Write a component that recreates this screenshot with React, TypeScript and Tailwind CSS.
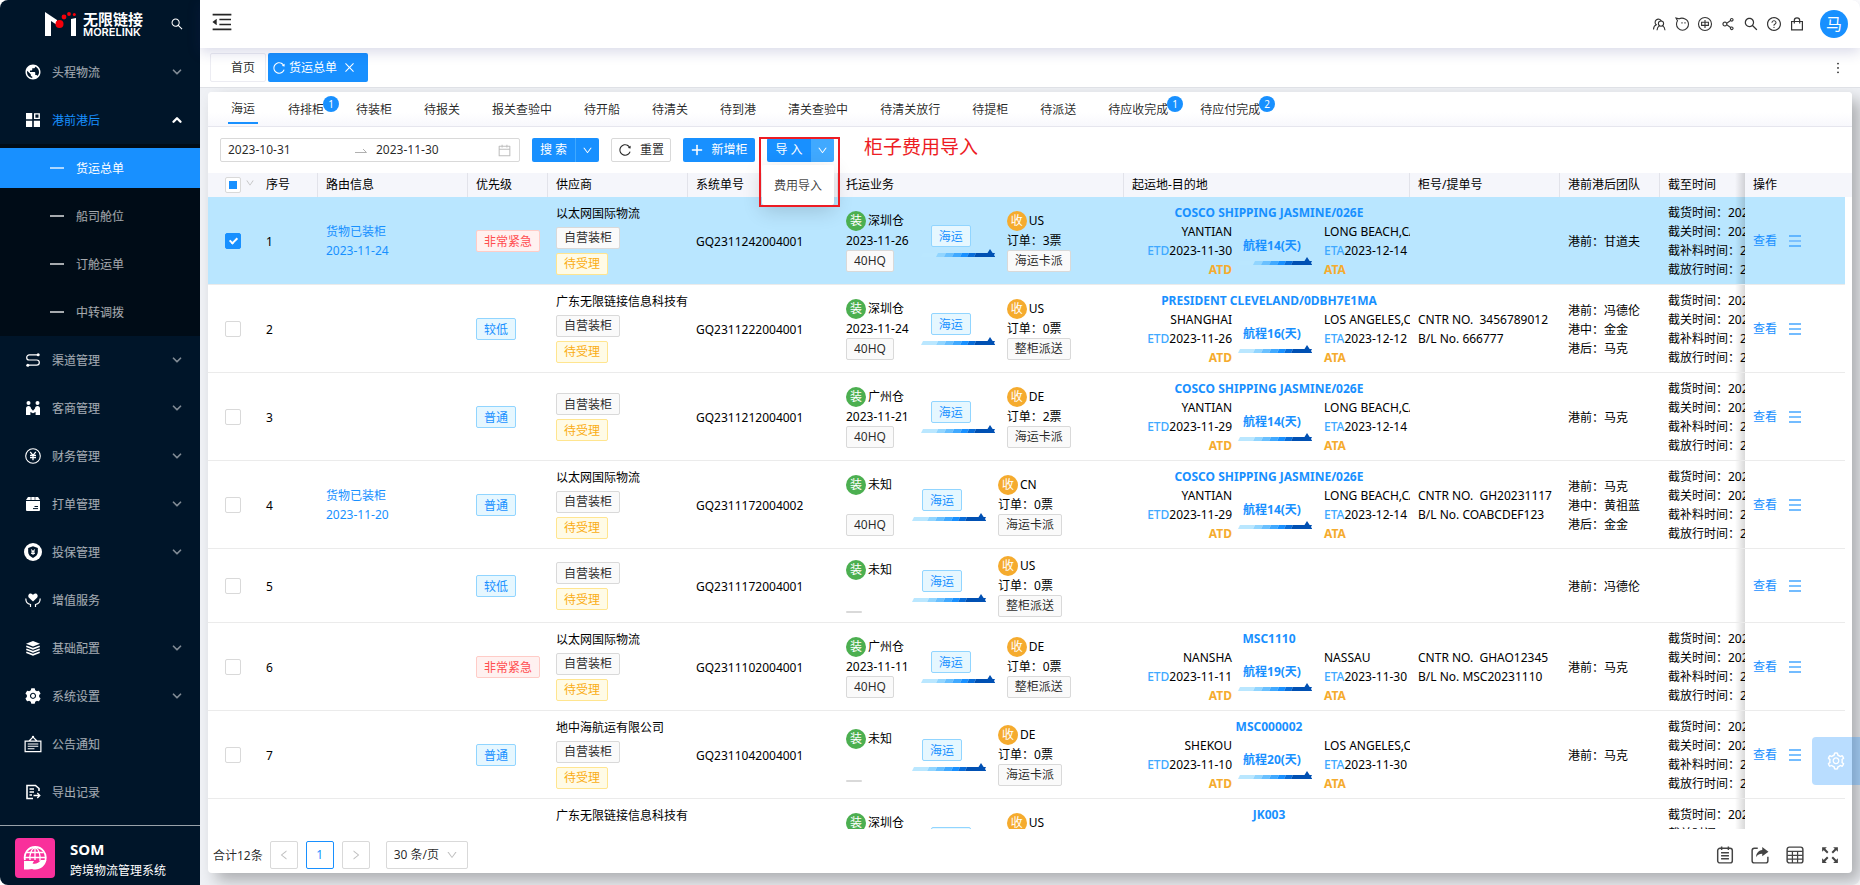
import type { ReactNode } from "react";
import clsx from "clsx";
import {
  AiFillSetting,
  AiOutlineCalendar,
  AiOutlineClose,
  AiOutlineDown,
  AiOutlineLeft,
  AiOutlineMenuFold,
  AiOutlineMore,
  AiOutlinePlus,
  AiOutlineQuestionCircle,
  AiOutlineReload,
  AiOutlineRight,
  AiOutlineSearch,
  AiOutlineSetting,
  AiOutlineShareAlt,
} from "react-icons/ai";
import { MdPublic } from "react-icons/md";
import { ChevronDown, ChevronUp } from "lucide-react";

/* ---------- icons ---------- */

function Svg({ size = 16, children }: { size?: number; children: ReactNode }) {
  return (
    <svg
      width={size}
      height={size}
      viewBox="0 0 16 16"
      fill="none"
      stroke="currentColor"
      strokeWidth="1.3"
      aria-hidden="true"
    >
      {children}
    </svg>
  );
}

const GridIcon = () => (
  <Svg>
    <path d="M1 1h6.2v6.2H1zM1 8.8h6.2V15H1zM8.8 8.8H15V15H8.8z" fill="currentColor" stroke="none" />
    <path d="M9.7 1.9h4.5v4.5H9.7z" strokeWidth="1.4" />
  </Svg>
);

const RouteIcon = () => (
  <Svg>
    <path d="M13 2.8H4.3a2.6 2.6 0 0 0 0 5.2h7.4a2.6 2.6 0 0 1 0 5.2H4" strokeWidth="1.2" />
    <circle cx="13.2" cy="2.8" r="1.5" fill="currentColor" stroke="none" />
    <circle cx="2.8" cy="13.2" r="1.5" fill="currentColor" stroke="none" />
  </Svg>
);

const PartnersIcon = () => (
  <Svg>
    <g fill="currentColor" stroke="none">
      <circle cx="3.5" cy="3" r="2" />
      <circle cx="12.5" cy="3" r="2" />
      <path d="M1 8.5C1 7 2 6 3.5 6S6 7 6 8.5l2 2.2 2-2.2C10 7 11 6 12.5 6S15 7 15 8.5V15h-4.4v-3L8 13.2 5.4 12v3H1z" />
    </g>
  </Svg>
);

const FinanceIcon = () => (
  <Svg>
    <circle cx="8" cy="8" r="7.3" strokeWidth="1.1" />
    <path d="M5.2 3.8L8 7.300l2.800-3.500M8 7.300v5M5 7.500h6M5 9.700h6" strokeWidth="1.300" />
  </Svg>
);

const BoxIcon = () => (
  <Svg>
    <path d="M3 1h10l2 3H1zM1 5h14v9a1 1 0 0 1-1 1H2a1 1 0 0 1-1-1z" fill="currentColor" stroke="none" />
    <path d="M9.5 10.5h3.5M8 12.6h5" stroke="#001529" strokeWidth="1" />
    <path d="M6 1v3M10 1v3" stroke="#001529" strokeWidth=".6" />
  </Svg>
);

const InsureIcon = () => (
  <Svg size={18}>
    <circle cx="8" cy="8" r="8" fill="currentColor" stroke="none" />
    <path d="M8 2.8l4.3 1.6v3.4c0 2.6-1.8 4.4-4.3 5.5-2.5-1.1-4.3-2.9-4.3-5.5V4.400z" fill="#001529" stroke="none" />
    <path d="M6.400 5.800L8 7.700l1.600-1.900M8 7.700v3M6.300 8h3.400M6.300 9.400h3.400" strokeWidth=".9" />
  </Svg>
);

const CareIcon = () => (
  <Svg>
    <path d="M8 9.600L4 5.800C2.600 4.300 3.400 1.500 5.600 1.500c1.200 0 2 .8 2.400 1.500.4-.7 1.200-1.500 2.400-1.500 2.200 0 3 2.800 1.600 4.300z" fill="currentColor" stroke="none" />
    <path d="M.8 6.500C.8 11 3 12 5.500 12.500V15M15.200 6.500c0 4.500-2.200 5.500-4.700 6V15" strokeWidth="1.200" />
  </Svg>
);

const LayersIcon = () => (
  <Svg>
    <path d="M8 1l7 2.700-7 2.700-7-2.700z" fill="currentColor" stroke="none" />
    <path d="M1.300 6.200L8 8.800l6.700-2.600M1.300 9.200L8 11.800l6.700-2.600M1.300 12.200L8 14.800l6.700-2.600" strokeWidth="1.600" />
  </Svg>
);

const NoticeIcon = () => (
  <Svg size={18}>
    <path d="M1 5.500h14v9.200H1zM4.500 5.300L8 1.800l3.500 3.500" strokeWidth="1.100" />
    <path d="M3.300 8h9.400M3.300 10h9.400M3.300 12.200h6" strokeWidth="1" />
    <circle cx="8" cy="1.600" r="1" fill="currentColor" stroke="none" />
  </Svg>
);

const ExportIcon = () => (
  <Svg>
    <path d="M14 7V4.500L10.500 1.500H2v13h6" strokeWidth="1.600" />
    <path d="M4.500 5H9M4.500 8H9M4.500 11H7M8.500 11.500h6M12.300 9l2.500 2.500-2.500 2.500" strokeWidth="1.300" />
  </Svg>
);

const TeamIcon = () => (
  <Svg>
    <path d="M2.500 13.500c0-2.600 1-4 2.800-4.700a3.200 3.200 0 1 1 5-3.600" strokeWidth="1.100" />
    <circle cx="10" cy="7.600" r="2.600" strokeWidth="1.100" />
    <path d="M6 14.200c.2-2.400 1-3.600 2.400-4.400M14 14.200c-.2-2.400-1-3.600-2.400-4.400" strokeWidth="1.100" />
  </Svg>
);

const ChatIcon = () => (
  <Svg>
    <path d="M2 2l3.200.8c3.300-1.600 9.300.2 9.300 5.400a6 6 0 0 1-12 0c0-1.500.4-2.600 1-3.500z" strokeWidth="1.100" />
    <path d="M8 6.300v1.300M11 6.300v1.300" strokeWidth="1.200" />
  </Svg>
);

const LangIcon = () => (
  <Svg>
    <circle cx="8" cy="8" r="6.500" strokeWidth="1.100" />
    <path d="M4.600 6.200h6.800v3.200H4.600zM8 4v8" strokeWidth="1.100" />
  </Svg>
);

const BagIcon = () => (
  <Svg>
    <path d="M2.600 5.500h10.800v8.400H2.600zM5.300 7.500V4.600a2.700 2.700 0 0 1 5.400 0v2.900" strokeWidth="1.200" />
  </Svg>
);

const NoteIcon = () => (
  <Svg size={18}>
    <rect x="1.500" y="2" width="13" height="13" rx="2" />
    <path d="M5 .5v3M11 .5v3M4.500 6h7M4.500 8.700h7M4.500 11.400h7" />
  </Svg>
);

const ShareIcon = () => (
  <Svg size={18}>
    <path d="M6 2H3a2 2 0 0 0-2 2v9a2 2 0 0 0 2 2h10a2 2 0 0 0 2-2V9.500" />
    <path d="M10 .8L15.500 5 10 9.200V6.800C7 6.800 5.500 8 4.500 10c0-3.500 2-6 5.500-6.500z" fill="currentColor" stroke="none" />
  </Svg>
);

const SheetIcon = () => (
  <Svg size={18}>
    <rect x="1" y="1" width="14" height="14" rx="2" />
    <path d="M1 4.700h14M1 8.300h14M1 11.700h14M5.700 4.700V15M10.300 4.700V15" strokeWidth="1.100" />
  </Svg>
);

const ExpandIcon = () => (
  <Svg size={18}>
    <path d="M1 1h4.200L1 5.200zM15 1v4.200L10.800 1zM1 15v-4.200L5.200 15zM15 15h-4.200l4.200-4.200z" fill="currentColor" stroke="none" />
    <path d="M2.500 2.500l3.500 3.500M13.500 2.500L10 6M2.500 13.500L6 10M13.500 13.500L10 10" strokeWidth="1.800" />
  </Svg>
);

const RowMenuIcon = () => (
  <svg width="12" height="12" viewBox="0 0 12 12" aria-hidden="true">
    <path d="M0 1h12M0 11h12" stroke="#46a6ff" strokeWidth="1.500" />
    <path d="M0 6h12" stroke="#7cc1ff" strokeWidth="2" />
  </svg>
);

const arrowColors = ["#bae7ff", "#91d5ff", "#69c0ff", "#40a9ff", "#1890ff", "#096dd9", "#0050b3"];
const arrowStops = [0, 15, 23, 31, 39, 46, 53, 72];

function RouteArrow() {
  return (
    <svg width="74" height="8" viewBox="0 0 74 8" aria-hidden="true">
      {arrowColors.map((color, i) => {
        const a = arrowStops[i];
        const b = arrowStops[i + 1];
        return <path key={color} d={`M${a + 2} 4H${b + 2}L${b} 8H${a}z`} fill={color} />;
      })}
      <path d="M63 5L66.500 4L69 0L74 7.500V8H63z" fill="#0050b3" />
    </svg>
  );
}

function Logo() {
  return (
    <div className="flex items-center gap-[7px]">
      <svg width="31" height="26" viewBox="0 0 31 26" aria-hidden="true">
        <path d="M0 1l12 8v5L6 10v15H0zM26 8l5-1v18h-5z" fill="#fff" />
        <circle cx="14.500" cy="13" r="4" fill="#f5000a" />
        <circle cx="19" cy="6" r="2.400" fill="#f5000a" />
        <circle cx="24" cy="3" r="1.900" fill="#f5000a" />
        <circle cx="29.300" cy="3.500" r="1.500" fill="#f5000a" />
      </svg>
      <div className="text-white">
        <div className="text-[15px] leading-4 font-bold">无限链接</div>
        <div className="font-['Inter'] text-[11px] leading-[10px] font-semibold">MORELINK</div>
      </div>
    </div>
  );
}

/* ---------- sidebar ---------- */

const topMenu = [{ label: "头程物流", icon: <MdPublic size={18} />, arrow: true }];
const subMenu = ["货运总单", "船司舱位", "订舱运单", "中转调拨"];
const menu = [
  { label: "渠道管理", icon: <RouteIcon />, arrow: true },
  { label: "客商管理", icon: <PartnersIcon />, arrow: true },
  { label: "财务管理", icon: <FinanceIcon />, arrow: true },
  { label: "打单管理", icon: <BoxIcon />, arrow: true },
  { label: "投保管理", icon: <InsureIcon />, arrow: true },
  { label: "增值服务", icon: <CareIcon />, arrow: false },
  { label: "基础配置", icon: <LayersIcon />, arrow: true },
  { label: "系统设置", icon: <AiFillSetting size={18} />, arrow: true },
  { label: "公告通知", icon: <NoticeIcon />, arrow: false },
  { label: "导出记录", icon: <ExportIcon />, arrow: false },
];

type MenuItemProps = { label: string; icon: ReactNode; arrow: boolean; open?: boolean };

function MenuItem({ label, icon, arrow, open }: MenuItemProps) {
  return (
    <a href="#" className="flex h-12 items-center pr-4 pl-6">
      <span className="flex w-[18px] justify-center text-white">{icon}</span>
      <span className={clsx("ml-[10px] flex-1 pt-0.5", open ? "text-[#1890ff]" : "text-white/65")}>{label}</span>
      {arrow && !open && <ChevronDown size={14} strokeWidth={3} className="text-white/50" />}
      {open && <ChevronUp size={14} strokeWidth={4} className="text-white" />}
    </a>
  );
}

function Sidebar() {
  return (
    <aside className="flex w-50 shrink-0 flex-col overflow-hidden rounded-l-lg bg-[#001529]">
      <div className="flex h-12 items-center justify-between pr-4 pl-[45px]">
        <Logo />
        <button aria-label="搜索菜单" className="text-white">
          <AiOutlineSearch size={14} />
        </button>
      </div>
      <nav className="min-h-0 flex-1 overflow-hidden">
        {topMenu.map((item) => (
          <MenuItem key={item.label} {...item} />
        ))}
        <MenuItem label="港前港后" icon={<GridIcon />} arrow open />
        <div className="flex flex-col gap-2 bg-[#000c17] py-1">
          {subMenu.map((label, i) => (
            <a
              key={label}
              href="#"
              className={clsx(
                "flex h-10 items-center gap-3 pl-[50px]",
                i === 0 ? "bg-[#1890ff] text-white" : "text-white/65"
              )}
            >
              <span className="h-0.5 w-[14px] bg-white/65" />
              <span className="pt-0.5">{label}</span>
            </a>
          ))}
        </div>
        {menu.map((item) => (
          <MenuItem key={item.label} {...item} />
        ))}
      </nav>
      <div className="flex h-[60px] shrink-0 items-center gap-[15px] border-t border-white/60 pt-1 pl-[15px] text-white">
        <div className="flex size-10 items-center justify-center rounded bg-[#f9309b]">
          <svg width="24" height="24" viewBox="0 0 24 24" fill="none" stroke="#fff" strokeWidth="1.300" aria-hidden="true">
            <path d="M2 14A10.500 10.500 0 1 1 22.400 14" strokeWidth="1.800" />
            <path d="M3.500 6.500h17M1.500 11.500h21M12 1v13M12 1C7.500 4 6.500 9 7 14M12 1c4.500 3 5.500 9 5 14" />
            <path d="M1 15h10l-1.500 2.500c3 1 6.500-.5 8.500-3.500h5.500c-1.500 7-8 11-14.500 9L5 23.500H1z" fill="#fff" stroke="none" />
          </svg>
        </div>
        <div className="pt-1">
          <div className="text-[15px] leading-5 font-bold">SOM</div>
          <div className="pt-0.5 leading-5">跨境物流管理系统</div>
        </div>
      </div>
    </aside>
  );
}

/* ---------- header ---------- */

const headerActions = [
  { label: "客户", icon: <TeamIcon /> },
  { label: "消息", icon: <ChatIcon /> },
  { label: "语言", icon: <LangIcon /> },
  { label: "分享", icon: <AiOutlineShareAlt size={16} /> },
  { label: "搜索", icon: <AiOutlineSearch size={16} /> },
  { label: "帮助", icon: <AiOutlineQuestionCircle size={16} /> },
  { label: "应用", icon: <BagIcon /> },
];

function Header() {
  return (
    <header className="relative z-10 flex h-12 shrink-0 items-center justify-between rounded-tr-lg bg-white pr-3 pl-[10px] shadow-[0_4px_14px_rgba(40,44,130,0.18)]">
      <button aria-label="收起菜单" className="mb-1">
        <AiOutlineMenuFold size={24} />
      </button>
      <div className="flex items-center gap-[7px] text-black/80">
        {headerActions.map((action) => (
          <button key={action.label} aria-label={action.label}>
            {action.icon}
          </button>
        ))}
        <button className="ml-2 size-7 rounded-full bg-[#1890ff] text-base leading-7 text-white">马</button>
      </div>
    </header>
  );
}

function PageTabs() {
  return (
    <div className="flex h-10 shrink-0 items-center justify-between border-b border-[#dfe1e6] bg-white pr-[14px] pl-[10px]">
      <div className="flex gap-0.5">
        <a href="#" className="flex h-[29px] items-center rounded-xs border border-[#ececf2] pr-[10px] pl-5">
          首页
        </a>
        <div className="flex h-[29px] items-center rounded-xs bg-[#1890ff] pr-[12px] pl-1 text-white">
          <button aria-label="刷新">
            <AiOutlineReload size={14} />
          </button>
          <span className="mr-1.5 ml-[3px]">货运总单</span>
          <button aria-label="关闭">
            <AiOutlineClose size={13} />
          </button>
        </div>
      </div>
      <button aria-label="更多">
        <AiOutlineMore size={16} />
      </button>
    </div>
  );
}

/* ---------- filters ---------- */

const statusTabs: { label: string; count?: number }[] = [
  { label: "待排柜", count: 1 },
  { label: "待装柜" },
  { label: "待报关" },
  { label: "报关查验中" },
  { label: "待开船" },
  { label: "待清关" },
  { label: "待到港" },
  { label: "清关查验中" },
  { label: "待清关放行" },
  { label: "待提柜" },
  { label: "待派送" },
  { label: "待应收完成", count: 1 },
  { label: "待应付完成", count: 2 },
];

function StatusTabs() {
  return (
    <nav className="flex h-[35px] shrink-0 items-stretch gap-8 rounded-t border-b border-[#e6e6ee] bg-linear-to-b from-white from-60% to-[#f8f8fc] pl-5">
      <a href="#" className="mb-0.5 flex w-[30px] items-center justify-center border-b-2 border-[#1890ff] pt-1">
        海运
      </a>
      <div className="-ml-0.5 flex gap-8">
        {statusTabs.map((tab) => (
          <a key={tab.label} href="#" className="relative flex items-center pt-0.5 whitespace-nowrap">
            {tab.label}
            {tab.count && (
              <span className="absolute top-1 -right-[15px] size-4 rounded-full bg-[#1890ff] text-center text-[10px] leading-4 text-white">
                {tab.count}
              </span>
            )}
          </a>
        ))}
      </div>
    </nav>
  );
}

function Toolbar() {
  return (
    <div className="flex h-[46px] shrink-0 items-center gap-3 px-3">
      <div className="flex h-6 w-[300px] items-center gap-[9px] rounded-xs border border-[#d9d9d9] px-[7px]">
        <input aria-label="开始日期" defaultValue="2023-10-31" className="w-[118px] shrink-0 outline-none" />
        <svg width="12" height="6" viewBox="0 0 12 6" fill="none" stroke="#b0b0b0" className="shrink-0" aria-hidden="true">
          <path d="M0 5.500h11.500L8 2" />
        </svg>
        <input aria-label="结束日期" defaultValue="2023-11-30" className="min-w-0 flex-1 outline-none" />
        <AiOutlineCalendar size={15} className="shrink-0 text-[#bfbfbf]" />
      </div>
      <div className="flex h-6 text-white">
        <button className="w-11 rounded-l-xs border-r border-[#40a9ff] bg-[#1890ff]">搜 索</button>
        <button aria-label="更多条件" className="flex w-[23px] items-center justify-center rounded-r-xs bg-[#1890ff]">
          <AiOutlineDown size={11} />
        </button>
      </div>
      <button className="flex h-6 w-[60px] items-center justify-center gap-2 rounded-xs border border-[#d9d9d9]">
        <AiOutlineReload size={14} />
        重置
      </button>
      <button className="flex h-6 w-[72px] items-center justify-center gap-[7px] rounded-xs bg-[#1890ff] text-white">
        <AiOutlinePlus size={14} strokeWidth={40} />
        新增柜
      </button>
      <div className="relative z-20">
        <div className="flex h-6 text-white">
          <button className="w-11 rounded-l-xs bg-[#1890ff]">导 入</button>
          <button aria-label="展开导入菜单" className="flex w-[23px] items-center justify-center rounded-r-xs bg-[#40a9ff]">
            <AiOutlineDown size={11} />
          </button>
        </div>
        <button className="absolute top-[27px] -left-[5px] h-10 w-[72px] rounded-xs bg-white pt-0.5 text-black/75 shadow-[0_6px_20px_rgba(0,0,0,0.16)]">
          费用导入
        </button>
        <div className="pointer-events-none absolute -top-px -left-2 h-[70px] w-[81px] border-2 border-[#ed1c24]" />
      </div>
      <p className="mb-1.5 ml-[18px] text-[19px] leading-5 whitespace-nowrap text-[#ed1c24]">柜子费用导入</p>
    </div>
  );
}

/* ---------- table ---------- */

type Shipment = {
  id: number;
  route?: string;
  priority?: "非常紧急" | "较低" | "普通";
  company?: string;
  orderNo?: string;
  warehouse: string;
  loadDate?: string;
  box?: string;
  country: string;
  tickets: number;
  delivery: string;
  voyage?: { name: string; from: string; to: string; etd: string; eta: string; days: number };
  cntr?: string;
  bl?: string;
  team: string[];
};

const shipments: Shipment[] = [
  {
    id: 1, route: "2023-11-24", priority: "非常紧急", company: "以太网国际物流", orderNo: "GQ2311242004001",
    warehouse: "深圳仓", loadDate: "2023-11-26", box: "40HQ", country: "US", tickets: 3, delivery: "海运卡派",
    voyage: { name: "COSCO SHIPPING JASMINE/026E", from: "YANTIAN", to: "LONG BEACH,CA", etd: "2023-11-30", eta: "2023-12-14", days: 14 },
    team: ["港前：甘道夫"],
  },
  {
    id: 2, priority: "较低", company: "广东无限链接信息科技有", orderNo: "GQ2311222004001",
    warehouse: "深圳仓", loadDate: "2023-11-24", box: "40HQ", country: "US", tickets: 0, delivery: "整柜派送",
    voyage: { name: "PRESIDENT CLEVELAND/0DBH7E1MA", from: "SHANGHAI", to: "LOS ANGELES,CA", etd: "2023-11-26", eta: "2023-12-12", days: 16 },
    cntr: "3456789012", bl: "666777", team: ["港前：冯德伦", "港中：金金", "港后：马克"],
  },
  {
    id: 3, priority: "普通", orderNo: "GQ2311212004001",
    warehouse: "广州仓", loadDate: "2023-11-21", box: "40HQ", country: "DE", tickets: 2, delivery: "海运卡派",
    voyage: { name: "COSCO SHIPPING JASMINE/026E", from: "YANTIAN", to: "LONG BEACH,CA", etd: "2023-11-29", eta: "2023-12-14", days: 14 },
    team: ["港前：马克"],
  },
  {
    id: 4, route: "2023-11-20", priority: "普通", company: "以太网国际物流", orderNo: "GQ2311172004002",
    warehouse: "未知", box: "40HQ", country: "CN", tickets: 0, delivery: "海运卡派",
    voyage: { name: "COSCO SHIPPING JASMINE/026E", from: "YANTIAN", to: "LONG BEACH,CA", etd: "2023-11-29", eta: "2023-12-14", days: 14 },
    cntr: "GH20231117", bl: "COABCDEF123", team: ["港前：马克", "港中：黄祖蓝", "港后：金金"],
  },
  {
    id: 5, priority: "较低", orderNo: "GQ2311172004001",
    warehouse: "未知", country: "US", tickets: 0, delivery: "整柜派送", team: ["港前：冯德伦"],
  },
  {
    id: 6, priority: "非常紧急", company: "以太网国际物流", orderNo: "GQ2311102004001",
    warehouse: "广州仓", loadDate: "2023-11-11", box: "40HQ", country: "DE", tickets: 0, delivery: "整柜派送",
    voyage: { name: "MSC1110", from: "NANSHA", to: "NASSAU", etd: "2023-11-11", eta: "2023-11-30", days: 19 },
    cntr: "GHAO12345", bl: "MSC20231110", team: ["港前：马克"],
  },
  {
    id: 7, priority: "普通", company: "地中海航运有限公司", orderNo: "GQ2311042004001",
    warehouse: "未知", country: "DE", tickets: 0, delivery: "海运卡派",
    voyage: { name: "MSC000002", from: "SHEKOU", to: "LOS ANGELES,CA", etd: "2023-11-10", eta: "2023-11-30", days: 20 },
    team: ["港前：马克"],
  },
  {
    id: 8, priority: "普通", company: "广东无限链接信息科技有", orderNo: "GQ2311032004001",
    warehouse: "深圳仓", loadDate: "2023-11-03", box: "40HQ", country: "US", tickets: 0, delivery: "海运卡派",
    voyage: { name: "JK003", from: "YANTIAN", to: "LONG BEACH,CA", etd: "2023-11-05", eta: "2023-11-25", days: 20 },
    team: ["港前：马克"],
  },
];

const tagTones = {
  gray: "border-[#d9d9d9] bg-[#fafafa] text-black/85",
  blue: "border-[#91d5ff] bg-[#e6f7ff] text-[#1890ff]",
  red: "border-[#ffccc7] bg-[#fff1f0] text-[#ff4d4f]",
  gold: "border-[#ffe58f] bg-[#fffbe6] text-[#faad14]",
};

function Tag({ tone, children }: { tone: keyof typeof tagTones; children: ReactNode }) {
  return (
    <span className={clsx("flex h-[22px] w-fit items-center rounded-xs border px-[7px] whitespace-nowrap", tagTones[tone])}>
      {children}
    </span>
  );
}

function Mark({ text, className }: { text: string; className: string }) {
  return (
    <span className={clsx("size-5 shrink-0 rounded-full text-center leading-5 text-white", className)}>{text}</span>
  );
}

function ConsignCell({ row }: { row: Shipment }) {
  return (
    <div className="flex items-center gap-3">
      <div className="min-w-[54px] whitespace-nowrap">
        <div className="flex items-center gap-0.5">
          <Mark text="装" className="bg-[#4caf50]" />
          {row.warehouse}
        </div>
        <div className="h-[19px]">{row.loadDate}</div>
        {row.box ? <Tag tone="gray">{row.box}</Tag> : <div className="mt-3 h-0.5 w-4 rounded bg-[#d9d9d9]" />}
      </div>
      <div className="flex flex-col gap-0.5">
        <div className="pl-[10px]">
          <Tag tone="blue">海运</Tag>
        </div>
        <RouteArrow />
      </div>
      <div className="whitespace-nowrap">
        <div className="flex items-center gap-0.5">
          <Mark text="收" className="bg-[#f5ab2e]" />
          {row.country}
        </div>
        <div>订单：{row.tickets}票</div>
        <Tag tone="gray">{row.delivery}</Tag>
      </div>
    </div>
  );
}

function VoyageCell({ voyage }: { voyage: NonNullable<Shipment["voyage"]> }) {
  return (
    <div className="whitespace-nowrap">
      <div className="pr-1 text-center font-bold text-[#1890ff]">{voyage.name}</div>
      <div className="flex items-center">
        <div className="w-25 shrink-0 text-right">
          <div>{voyage.from}</div>
          <div>
            <span className="font-medium text-[#40a9ff]">ETD</span>
            {voyage.etd}
          </div>
          <div className="font-bold text-[#f5ab2e]">ATD</div>
        </div>
        <div className="mr-3 ml-1.5 flex shrink-0 flex-col items-center gap-0.5">
          <div className="pr-1.5 font-bold text-[#1890ff]">航程{voyage.days}(天)</div>
          <RouteArrow />
        </div>
        <div>
          <div>{voyage.to}</div>
          <div>
            <span className="font-medium text-[#40a9ff]">ETA</span>
            {voyage.eta}
          </div>
          <div className="font-bold text-[#f5ab2e]">ATA</div>
        </div>
      </div>
    </div>
  );
}

const columns = ["序号", "路由信息", "优先级", "供应商", "系统单号", "托运业务", "起运地-目的地", "柜号/提单号", "港前港后团队"];

const cell = "overflow-hidden border-b border-[#ebebeb] pt-1.5 pb-[5px] pl-2";
const checkbox = "relative block size-4 appearance-none rounded-xs border border-[#d9d9d9] bg-white";
const fixedEdge =
  "relative before:absolute before:inset-y-0 before:-left-2.5 before:w-2.5 before:bg-linear-to-l before:from-black/15 before:to-transparent";

function ShipmentRow({ row }: { row: Shipment }) {
  const selected = row.id === 1;
  return (
    <tr className={clsx("h-[74px]", selected ? "bg-[#b9e6ff]" : "bg-white")}>
      <td className="border-b border-[#ebebeb] pl-[17px]">
        <input
          type="checkbox"
          aria-label={`选择第${row.id}行`}
          defaultChecked={selected}
          className={clsx(
            checkbox,
            "checked:border-[#1890ff] checked:bg-[#1890ff] checked:before:absolute checked:before:top-0.5 checked:before:left-[5px] checked:before:h-2 checked:before:w-[5px] checked:before:rotate-45 checked:before:border-r-2 checked:before:border-b-2 checked:before:border-white"
          )}
        />
      </td>
      <td className={cell}>{row.id}</td>
      <td className={clsx(cell, "text-[#1890ff]")}>
        {row.route && (
          <a href="#">
            货物已装柜
            <br />
            {row.route}
          </a>
        )}
      </td>
      <td className={cell}>
        {row.priority && <Tag tone={row.priority === "非常紧急" ? "red" : "blue"}>{row.priority}</Tag>}
      </td>
      <td className={cell}>
        <div className={clsx("flex flex-col gap-1 whitespace-nowrap", row.company && "pb-1")}>
          {row.company && <span>{row.company}</span>}
          <Tag tone="gray">自营装柜</Tag>
          <Tag tone="gold">待受理</Tag>
        </div>
      </td>
      <td className={cell}>{row.orderNo}</td>
      <td className={cell}>
        <ConsignCell row={row} />
      </td>
      <td className={cell}>{row.voyage && <VoyageCell voyage={row.voyage} />}</td>
      <td className={clsx(cell, "whitespace-pre")}>
        {row.cntr && <div>CNTR NO.  {row.cntr}</div>}
        {row.bl && <div>B/L No. {row.bl}</div>}
      </td>
      <td className={clsx(cell, "whitespace-nowrap")}>
        {row.team.map((member) => (
          <div key={member}>{member}</div>
        ))}
      </td>
      <td className={clsx(cell, "whitespace-nowrap")}>
        {row.voyage && (
          <>
            <div>截货时间：2023-11-28</div>
            <div>截关时间：2023-11-28</div>
            <div>截补料时间：2023-11-28</div>
            <div>截放行时间：2023-11-28</div>
          </>
        )}
      </td>
      <td className={clsx("border-b border-[#ebebeb] pl-2", fixedEdge, selected ? "bg-[#b9e6ff]" : "bg-white")}>
        <div className="flex items-center gap-3">
          <a href="#" className="text-[#1890ff]">
            查看
          </a>
          <button aria-label="更多操作">
            <RowMenuIcon />
          </button>
        </div>
      </td>
      <td className="bg-white" />
    </tr>
  );
}

function ShipmentTable() {
  return (
    <div className="min-h-0 flex-1 overflow-hidden">
      <table className="w-full table-fixed border-separate border-spacing-0 leading-[19px] text-black">
        <colgroup>
          <col className="w-[50px]" />
          <col className="w-15" />
          <col className="w-[150px]" />
          <col className="w-20" />
          <col className="w-35" />
          <col className="w-[150px]" />
          <col />
          <col />
          <col className="w-[150px]" />
          <col className="w-25" />
          <col className="w-[85px]" />
          <col className="w-25" />
          <col className="w-[7px]" />
        </colgroup>
        <thead>
          <tr className="h-6 bg-[#f5f6fb] text-left">
            <th className="pl-[17px]">
              <div className="flex items-center gap-1">
                <input
                  type="checkbox"
                  aria-label="全选"
                  className={clsx(checkbox, "before:absolute before:top-[3px] before:left-[3px] before:size-2 before:bg-[#1890ff]")}
                />
                <AiOutlineDown size={10} className="mb-1 text-[#bfbfbf]" />
              </div>
            </th>
            {columns.map((label) => (
              <th key={label} className="border-r border-[#e2e3ea] pb-0.5 pl-2 font-normal whitespace-nowrap">
                {label}
              </th>
            ))}
            <th className="pb-0.5 pl-2 font-normal">截至时间</th>
            <th className={clsx("bg-[#f5f6fb] pb-0.5 pl-2 font-normal", fixedEdge)}>操作</th>
            <th />
          </tr>
        </thead>
        <tbody>
          {shipments.map((row) => (
            <ShipmentRow key={row.id} row={row} />
          ))}
        </tbody>
      </table>
    </div>
  );
}

function Pager() {
  return (
    <footer className="flex h-11 shrink-0 items-center justify-between pt-2 pr-[13px] pl-[5px]">
      <div className="flex items-center gap-2">
        <span className="-mr-px pt-0.5">合计12条</span>
        <button aria-label="上一页" className="flex size-7 items-center justify-center rounded-xs border border-[#d9d9d9] text-[#bfbfbf]">
          <AiOutlineLeft size={12} />
        </button>
        <button className="size-7 rounded-xs border border-[#1890ff] text-[#1890ff]">1</button>
        <button aria-label="下一页" className="flex size-7 items-center justify-center rounded-xs border border-[#d9d9d9] text-[#bfbfbf]">
          <AiOutlineRight size={12} />
        </button>
        <div className="relative ml-2">
          <select aria-label="每页条数" className="h-7 w-[82px] appearance-none rounded-xs border border-[#d9d9d9] bg-white pl-[7px]">
            <option>30 条/页</option>
            <option>50 条/页</option>
          </select>
          <AiOutlineDown size={12} className="pointer-events-none absolute top-2 right-[10px] text-[#bfbfbf]" />
        </div>
      </div>
      <div className="flex gap-[17px] text-[#444]">
        <button aria-label="备注"><NoteIcon /></button>
        <button aria-label="导出"><ShareIcon /></button>
        <button aria-label="列设置"><SheetIcon /></button>
        <button aria-label="全屏"><ExpandIcon /></button>
      </div>
    </footer>
  );
}

export default function App() {
  return (
    <div className="flex h-screen bg-white font-['Noto_Sans','Noto_Sans_CJK_SC',sans-serif] text-xs text-black/85">
      <Sidebar />
      <div className="flex min-w-0 flex-1 flex-col rounded-r-lg bg-[#eff1f5]">
        <Header />
        <PageTabs />
        <main className="flex min-h-0 flex-1 flex-col overflow-hidden px-2 pt-1 pb-3">
          <section className="flex min-h-0 flex-1 flex-col rounded bg-white shadow-[8px_8px_16px_rgba(0,0,0,0.28)]">
            <StatusTabs />
            <Toolbar />
            <ShipmentTable />
            <Pager />
          </section>
        </main>
      </div>
      <button
        aria-label="页面设置"
        className="fixed right-0 bottom-25 z-30 flex size-12 items-center justify-center rounded-l bg-[#1890ff]/30 text-white"
      >
        <AiOutlineSetting size={20} />
      </button>
    </div>
  );
}
